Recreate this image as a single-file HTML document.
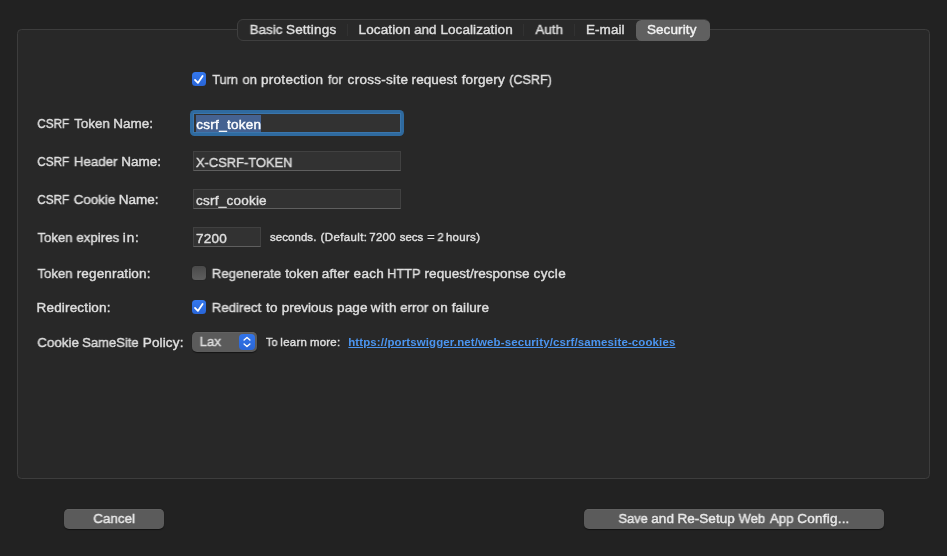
<!DOCTYPE html>
<html><head><meta charset="utf-8"><title>Security</title>
<style>
html,body{margin:0;padding:0;}
body{width:947px;height:556px;background:#222222;position:relative;overflow:hidden;font-family:"Liberation Sans",sans-serif;}
.t{position:absolute;white-space:pre;will-change:transform;transform-origin:0 0;}
.abs{position:absolute;box-sizing:border-box;}
#box{left:17px;top:29px;width:913px;height:450px;background:#282828;border:1px solid #3d3d3d;border-radius:4.5px;}
#tabs{left:237px;top:19px;width:473px;height:22px;background:#292929;border:1px solid #3f3f3f;border-radius:6px;}
#tabsel{left:636px;top:19.5px;width:73.5px;height:21.2px;background:#606060;border-radius:5.5px;}
.sep{width:1px;height:12px;top:24px;background:#323232;}
.cb{width:14px;height:14px;border-radius:3.5px;}
.cb.on{background:linear-gradient(#3478ee,#2865d8);}
.cb.off{background:linear-gradient(#4a4a4a,#5e5e5e);box-shadow:0 0 1px rgba(0,0,0,.5);}
.fld{height:20px;background:#323232;border:1px solid #414141;border-bottom-color:#5f5f5f;}
.btn{height:20px;background:#5b5b5b;border-radius:5px;box-shadow:0 0.5px 1px rgba(0,0,0,.5), inset 0 0.5px 0 #696969;}
</style></head><body>
<div id="box" class="abs"></div>
<div id="tabs" class="abs"></div>
<div class="abs sep" style="left:347px"></div>
<div class="abs sep" style="left:523px"></div>
<div class="abs sep" style="left:574px"></div>
<div id="tabsel" class="abs"></div>

<div class="abs cb on" style="left:192px;top:72px"><svg viewBox="0 0 14 14" width="14" height="14" style="position:absolute;left:0;top:0"><path d="M3.0 7.9 L5.9 10.9 L10.6 3.9" fill="none" stroke="#fff" stroke-width="1.8" stroke-linecap="round" stroke-linejoin="round"/></svg></div>
<div class="abs cb off" style="left:192px;top:266px"></div>
<div class="abs cb on" style="left:192px;top:300px"><svg viewBox="0 0 14 14" width="14" height="14" style="position:absolute;left:0;top:0"><path d="M3.0 7.9 L5.9 10.9 L10.6 3.9" fill="none" stroke="#fff" stroke-width="1.8" stroke-linecap="round" stroke-linejoin="round"/></svg></div>

<div class="abs" style="left:190px;top:110px;width:214px;height:26px;background:#2f6a9f;border-radius:4.5px;"></div>
<div class="abs" style="left:193px;top:113px;width:208px;height:20px;background:#323232;border:1px solid #3a76ad;"></div>
<div class="abs" style="left:196px;top:115px;width:65px;height:17px;background:#456291;"></div>
<div class="abs fld" style="left:193px;top:151px;width:208px;"></div>
<div class="abs fld" style="left:193px;top:189px;width:208px;"></div>
<div class="abs fld" style="left:193px;top:227px;width:68px;"></div>

<div class="abs btn" style="left:192px;top:332px;width:65px;"></div>
<div class="abs" style="left:239px;top:334px;width:16px;height:16px;border-radius:4px;background:linear-gradient(#3274ea,#2a66d6);">
<svg viewBox="0 0 16 16" width="16" height="16" style="position:absolute;left:0;top:0"><path d="M5.1 6.0 L8 3.5 L10.9 6.0 M5.1 10.0 L8 12.5 L10.9 10.0" fill="none" stroke="#fff" stroke-width="1.4" stroke-linecap="round" stroke-linejoin="round"/></svg></div>

<div class="abs btn" style="left:64px;top:509px;width:100px;"></div>
<div class="abs btn" style="left:584px;top:509px;width:300px;"></div>
<div class="line">
<span class="t" style="left:249px;top:22px;font-size:13.52px;line-height:15px;-webkit-text-stroke:0.42px #dfdfdf;transform:translateX(0.58px) scaleX(0.9949);color:#dfdfdf;font-weight:400;">Basic</span>
<span class="t" style="left:285px;top:22px;font-size:13.52px;line-height:15px;-webkit-text-stroke:0.42px #dfdfdf;letter-spacing:0.200px;transform:translateX(0.93px);color:#dfdfdf;font-weight:400;">Settings</span>
</div>
<div class="line">
<span class="t" style="left:358px;top:22px;font-size:13.52px;line-height:15px;-webkit-text-stroke:0.42px #dfdfdf;letter-spacing:0.118px;transform:translateX(0.58px);color:#dfdfdf;font-weight:400;">Location</span>
<span class="t" style="left:414px;top:22px;font-size:13.52px;line-height:15px;-webkit-text-stroke:0.42px #dfdfdf;transform:translateX(0.20px) scaleX(0.9860);color:#dfdfdf;font-weight:400;">and</span>
<span class="t" style="left:440px;top:22px;font-size:13.52px;line-height:15px;-webkit-text-stroke:0.42px #dfdfdf;letter-spacing:0.081px;transform:translateX(0.38px);color:#dfdfdf;font-weight:400;">Localization</span>
</div>
<div class="line">
<span class="t" style="left:535px;top:22px;font-size:13.52px;line-height:15px;-webkit-text-stroke:0.42px #dfdfdf;transform:translateX(0.40px) scaleX(0.9974);color:#dfdfdf;font-weight:400;">Auth</span>
</div>
<div class="line">
<span class="t" style="left:585px;top:22px;font-size:13.52px;line-height:15px;-webkit-text-stroke:0.42px #dfdfdf;letter-spacing:0.050px;transform:translateX(0.99px);color:#dfdfdf;font-weight:400;">E-mail</span>
</div>
<div class="line">
<span class="t" style="left:646px;top:22px;font-size:13.52px;line-height:15px;-webkit-text-stroke:0.42px #f2f2f2;letter-spacing:0.096px;transform:translateX(0.89px);color:#f2f2f2;font-weight:400;">Security</span>
</div>
<div class="line">
<span class="t" style="left:212px;top:72px;font-size:13.52px;line-height:15px;-webkit-text-stroke:0.42px #dfdfdf;transform:translateX(0.32px) scaleX(0.9345);color:#dfdfdf;font-weight:400;">Turn</span>
<span class="t" style="left:242px;top:72px;font-size:13.52px;line-height:15px;-webkit-text-stroke:0.42px #dfdfdf;transform:translateX(0.51px) scaleX(0.9590);color:#dfdfdf;font-weight:400;">on</span>
<span class="t" style="left:260px;top:72px;font-size:13.52px;line-height:15px;-webkit-text-stroke:0.42px #dfdfdf;letter-spacing:0.296px;transform:translateX(0.94px);color:#dfdfdf;font-weight:400;">protection</span>
<span class="t" style="left:327px;top:72px;font-size:13.52px;line-height:15px;-webkit-text-stroke:0.42px #dfdfdf;transform:translateX(0.80px) scaleX(0.9426);color:#dfdfdf;font-weight:400;">for</span>
<span class="t" style="left:347px;top:72px;font-size:13.52px;line-height:15px;-webkit-text-stroke:0.42px #dfdfdf;letter-spacing:0.279px;transform:translateX(0.60px);color:#dfdfdf;font-weight:400;">cross-site</span>
<span class="t" style="left:411px;top:72px;font-size:13.52px;line-height:15px;-webkit-text-stroke:0.42px #dfdfdf;letter-spacing:0.074px;transform:translateX(0.56px);color:#dfdfdf;font-weight:400;">request</span>
<span class="t" style="left:461px;top:72px;font-size:13.52px;line-height:15px;-webkit-text-stroke:0.42px #dfdfdf;letter-spacing:0.156px;transform:translateX(0.66px);color:#dfdfdf;font-weight:400;">forgery</span>
<span class="t" style="left:509px;top:72px;font-size:13.52px;line-height:15px;-webkit-text-stroke:0.42px #dfdfdf;transform:translateX(0.22px) scaleX(0.9317);color:#dfdfdf;font-weight:400;">(CSRF)</span>
</div>
<div class="line">
<span class="t" style="left:37px;top:116px;font-size:13.52px;line-height:15px;-webkit-text-stroke:0.42px #dfdfdf;transform:translateX(0.32px) scaleX(0.8669);color:#dfdfdf;font-weight:400;">CSRF</span>
<span class="t" style="left:74px;top:116px;font-size:13.52px;line-height:15px;-webkit-text-stroke:0.42px #dfdfdf;transform:translateX(0.19px) scaleX(0.9883);color:#dfdfdf;font-weight:400;">Token</span>
<span class="t" style="left:113px;top:116px;font-size:13.52px;line-height:15px;-webkit-text-stroke:0.42px #dfdfdf;letter-spacing:0.024px;transform:translateX(0.15px);color:#dfdfdf;font-weight:400;">Name:</span>
</div>
<div class="line">
<span class="t" style="left:37px;top:154px;font-size:13.52px;line-height:15px;-webkit-text-stroke:0.42px #dfdfdf;transform:translateX(0.32px) scaleX(0.8669);color:#dfdfdf;font-weight:400;">CSRF</span>
<span class="t" style="left:73px;top:154px;font-size:13.52px;line-height:15px;-webkit-text-stroke:0.42px #dfdfdf;transform:translateX(0.74px) scaleX(0.9905);color:#dfdfdf;font-weight:400;">Header</span>
<span class="t" style="left:121px;top:154px;font-size:13.52px;line-height:15px;-webkit-text-stroke:0.42px #dfdfdf;letter-spacing:0.047px;transform:translateX(0.13px);color:#dfdfdf;font-weight:400;">Name:</span>
</div>
<div class="line">
<span class="t" style="left:37px;top:192px;font-size:13.52px;line-height:15px;-webkit-text-stroke:0.42px #dfdfdf;transform:translateX(0.32px) scaleX(0.8669);color:#dfdfdf;font-weight:400;">CSRF</span>
<span class="t" style="left:73px;top:192px;font-size:13.52px;line-height:15px;-webkit-text-stroke:0.42px #dfdfdf;transform:translateX(0.74px) scaleX(0.9882);color:#dfdfdf;font-weight:400;">Cookie</span>
<span class="t" style="left:118px;top:192px;font-size:13.52px;line-height:15px;-webkit-text-stroke:0.42px #dfdfdf;letter-spacing:0.004px;transform:translateX(0.69px);color:#dfdfdf;font-weight:400;">Name:</span>
</div>
<div class="line">
<span class="t" style="left:37px;top:230px;font-size:13.52px;line-height:15px;-webkit-text-stroke:0.42px #dfdfdf;transform:translateX(0.49px) scaleX(0.9716);color:#dfdfdf;font-weight:400;">Token</span>
<span class="t" style="left:76px;top:230px;font-size:13.52px;line-height:15px;-webkit-text-stroke:0.42px #dfdfdf;transform:translateX(0.39px) scaleX(0.9840);color:#dfdfdf;font-weight:400;">expires</span>
<span class="t" style="left:122px;top:230px;font-size:13.52px;line-height:15px;-webkit-text-stroke:0.42px #dfdfdf;letter-spacing:0.826px;transform:translateX(0.83px);color:#dfdfdf;font-weight:400;">in:</span>
</div>
<div class="line">
<span class="t" style="left:37px;top:266px;font-size:13.52px;line-height:15px;-webkit-text-stroke:0.42px #dfdfdf;transform:translateX(0.49px) scaleX(0.9716);color:#dfdfdf;font-weight:400;">Token</span>
<span class="t" style="left:76px;top:266px;font-size:13.52px;line-height:15px;-webkit-text-stroke:0.42px #dfdfdf;letter-spacing:0.146px;transform:translateX(0.70px);color:#dfdfdf;font-weight:400;">regenration:</span>
</div>
<div class="line">
<span class="t" style="left:36px;top:300px;font-size:13.52px;line-height:15px;-webkit-text-stroke:0.42px #dfdfdf;letter-spacing:0.161px;transform:translateX(0.57px);color:#dfdfdf;font-weight:400;">Redirection:</span>
</div>
<div class="line">
<span class="t" style="left:37px;top:335px;font-size:13.52px;line-height:15px;-webkit-text-stroke:0.42px #dfdfdf;transform:translateX(0.32px) scaleX(0.9911);color:#dfdfdf;font-weight:400;">Cookie</span>
<span class="t" style="left:82px;top:335px;font-size:13.52px;line-height:15px;-webkit-text-stroke:0.42px #dfdfdf;transform:translateX(0.16px) scaleX(0.9648);color:#dfdfdf;font-weight:400;">SameSite</span>
<span class="t" style="left:142px;top:335px;font-size:13.52px;line-height:15px;-webkit-text-stroke:0.42px #dfdfdf;letter-spacing:0.139px;transform:translateX(0.75px);color:#dfdfdf;font-weight:400;">Policy:</span>
</div>
<div class="line">
<span class="t" style="left:196px;top:117px;font-size:13.52px;line-height:15px;-webkit-text-stroke:0.42px #ffffff;letter-spacing:0.268px;transform:translateX(0.29px);color:#ffffff;font-weight:400;">csrf_token</span>
</div>
<div class="line">
<span class="t" style="left:195px;top:155px;font-size:13.52px;line-height:15px;-webkit-text-stroke:0.42px #dfdfdf;transform:translateX(0.95px) scaleX(0.9552);color:#dfdfdf;font-weight:400;">X-CSRF-TOKEN</span>
</div>
<div class="line">
<span class="t" style="left:195px;top:193px;font-size:13.52px;line-height:15px;-webkit-text-stroke:0.42px #dfdfdf;letter-spacing:0.234px;transform:translateX(0.94px);color:#dfdfdf;font-weight:400;">csrf_cookie</span>
</div>
<div class="line">
<span class="t" style="left:195px;top:231px;font-size:13.52px;line-height:15px;-webkit-text-stroke:0.42px #dfdfdf;letter-spacing:0.248px;transform:translateX(0.89px);color:#dfdfdf;font-weight:400;">7200</span>
</div>
<div class="line">
<span class="t" style="left:269px;top:231px;font-size:11.44px;line-height:12px;-webkit-text-stroke:0.42px #dfdfdf;letter-spacing:0.099px;transform:translateX(0.88px);color:#dfdfdf;font-weight:400;">seconds.</span>
<span class="t" style="left:320px;top:231px;font-size:11.44px;line-height:12px;-webkit-text-stroke:0.42px #dfdfdf;letter-spacing:0.391px;transform:translateX(0.55px);color:#dfdfdf;font-weight:400;">(Default:</span>
<span class="t" style="left:369px;top:231px;font-size:11.44px;line-height:12px;-webkit-text-stroke:0.42px #dfdfdf;letter-spacing:0.313px;transform:translateX(0.22px);color:#dfdfdf;font-weight:400;">7200</span>
<span class="t" style="left:399px;top:231px;font-size:11.44px;line-height:12px;-webkit-text-stroke:0.42px #dfdfdf;letter-spacing:0.019px;transform:translateX(0.68px);color:#dfdfdf;font-weight:400;">secs</span>
<span class="t" style="left:427px;top:231px;font-size:11.44px;line-height:12px;-webkit-text-stroke:0.42px #dfdfdf;transform:translateX(0.19px) scaleX(1.1083);color:#dfdfdf;font-weight:400;">=</span>
<span class="t" style="left:437px;top:231px;font-size:11.44px;line-height:12px;-webkit-text-stroke:0.42px #dfdfdf;transform:translateX(0.44px) scaleX(0.9821);color:#dfdfdf;font-weight:400;">2</span>
<span class="t" style="left:445px;top:231px;font-size:11.44px;line-height:12px;-webkit-text-stroke:0.42px #dfdfdf;letter-spacing:0.326px;transform:translateX(0.90px);color:#dfdfdf;font-weight:400;">hours)</span>
</div>
<div class="line">
<span class="t" style="left:211px;top:266px;font-size:13.52px;line-height:15px;-webkit-text-stroke:0.42px #dfdfdf;transform:translateX(0.67px) scaleX(0.9848);color:#dfdfdf;font-weight:400;">Regenerate</span>
<span class="t" style="left:285px;top:266px;font-size:13.52px;line-height:15px;-webkit-text-stroke:0.42px #dfdfdf;letter-spacing:0.036px;transform:translateX(0.22px);color:#dfdfdf;font-weight:400;">token</span>
<span class="t" style="left:321px;top:266px;font-size:13.52px;line-height:15px;-webkit-text-stroke:0.42px #dfdfdf;letter-spacing:0.087px;transform:translateX(0.87px);color:#dfdfdf;font-weight:400;">after</span>
<span class="t" style="left:353px;top:266px;font-size:13.52px;line-height:15px;-webkit-text-stroke:0.42px #dfdfdf;letter-spacing:0.278px;transform:translateX(0.59px);color:#dfdfdf;font-weight:400;">each</span>
<span class="t" style="left:387px;top:266px;font-size:13.52px;line-height:15px;-webkit-text-stroke:0.42px #dfdfdf;transform:translateX(0.13px) scaleX(0.9468);color:#dfdfdf;font-weight:400;">HTTP</span>
<span class="t" style="left:424px;top:266px;font-size:13.52px;line-height:15px;-webkit-text-stroke:0.42px #dfdfdf;letter-spacing:0.036px;transform:translateX(0.55px);color:#dfdfdf;font-weight:400;">request/response</span>
<span class="t" style="left:533px;top:266px;font-size:13.52px;line-height:15px;-webkit-text-stroke:0.42px #dfdfdf;letter-spacing:0.338px;transform:translateX(0.58px);color:#dfdfdf;font-weight:400;">cycle</span>
</div>
<div class="line">
<span class="t" style="left:211px;top:300px;font-size:13.52px;line-height:15px;-webkit-text-stroke:0.42px #dfdfdf;transform:translateX(0.65px) scaleX(0.9886);color:#dfdfdf;font-weight:400;">Redirect</span>
<span class="t" style="left:266px;top:300px;font-size:13.52px;line-height:15px;-webkit-text-stroke:0.42px #dfdfdf;letter-spacing:0.293px;transform:translateX(0.07px);color:#dfdfdf;font-weight:400;">to</span>
<span class="t" style="left:281px;top:300px;font-size:13.52px;line-height:15px;-webkit-text-stroke:0.42px #dfdfdf;letter-spacing:0.001px;transform:translateX(0.66px);color:#dfdfdf;font-weight:400;">previous</span>
<span class="t" style="left:337px;top:300px;font-size:13.52px;line-height:15px;-webkit-text-stroke:0.42px #dfdfdf;letter-spacing:0.106px;transform:translateX(0.10px);color:#dfdfdf;font-weight:400;">page</span>
<span class="t" style="left:370px;top:300px;font-size:13.52px;line-height:15px;-webkit-text-stroke:0.42px #dfdfdf;letter-spacing:0.521px;transform:translateX(0.84px);color:#dfdfdf;font-weight:400;">with</span>
<span class="t" style="left:400px;top:300px;font-size:13.52px;line-height:15px;-webkit-text-stroke:0.42px #dfdfdf;transform:translateX(0.24px) scaleX(0.9788);color:#dfdfdf;font-weight:400;">error</span>
<span class="t" style="left:432px;top:300px;font-size:13.52px;line-height:15px;-webkit-text-stroke:0.42px #dfdfdf;letter-spacing:0.402px;transform:translateX(0.33px);color:#dfdfdf;font-weight:400;">on</span>
<span class="t" style="left:451px;top:300px;font-size:13.52px;line-height:15px;-webkit-text-stroke:0.42px #dfdfdf;letter-spacing:0.085px;transform:translateX(0.63px);color:#dfdfdf;font-weight:400;">failure</span>
</div>
<div class="line">
<span class="t" style="left:199px;top:334px;font-size:13.52px;line-height:15px;-webkit-text-stroke:0.42px #dfdfdf;transform:translateX(0.53px) scaleX(0.9889);color:#dfdfdf;font-weight:400;">Lax</span>
</div>
<div class="line">
<span class="t" style="left:265px;top:336px;font-size:11.44px;line-height:12px;-webkit-text-stroke:0.42px #dfdfdf;transform:translateX(0.95px) scaleX(0.9577);color:#dfdfdf;font-weight:400;">To</span>
<span class="t" style="left:280px;top:336px;font-size:11.44px;line-height:12px;-webkit-text-stroke:0.42px #dfdfdf;letter-spacing:0.262px;transform:translateX(0.34px);color:#dfdfdf;font-weight:400;">learn</span>
<span class="t" style="left:309px;top:336px;font-size:11.44px;line-height:12px;-webkit-text-stroke:0.42px #dfdfdf;letter-spacing:0.232px;transform:translateX(0.91px);color:#dfdfdf;font-weight:400;">more:</span>
</div>
<div class="line">
<span class="t" style="left:348px;top:336px;font-size:11.44px;line-height:12px;letter-spacing:0.140px;transform:translateX(0.22px);color:#4b95f0;font-weight:700;text-decoration:underline;text-underline-offset:1px;">https://portswigger.net/web-security/csrf/samesite-cookies</span>
</div>
<div class="line">
<span class="t" style="left:93px;top:511px;font-size:13.52px;line-height:15px;-webkit-text-stroke:0.42px #e8e8e8;transform:translateX(0.32px) scaleX(0.9930);color:#e8e8e8;font-weight:400;">Cancel</span>
</div>
<div class="line">
<span class="t" style="left:618px;top:511px;font-size:13.52px;line-height:15px;-webkit-text-stroke:0.42px #e8e8e8;transform:translateX(0.47px) scaleX(0.9523);color:#e8e8e8;font-weight:400;">Save</span>
<span class="t" style="left:651px;top:511px;font-size:13.52px;line-height:15px;-webkit-text-stroke:0.42px #e8e8e8;letter-spacing:0.060px;transform:translateX(0.27px);color:#e8e8e8;font-weight:400;">and</span>
<span class="t" style="left:677px;top:511px;font-size:13.52px;line-height:15px;-webkit-text-stroke:0.42px #e8e8e8;letter-spacing:0.037px;transform:translateX(0.41px);color:#e8e8e8;font-weight:400;">Re-Setup</span>
<span class="t" style="left:738px;top:511px;font-size:13.52px;line-height:15px;-webkit-text-stroke:0.42px #e8e8e8;transform:translateX(0.59px) scaleX(0.9618);color:#e8e8e8;font-weight:400;">Web</span>
<span class="t" style="left:769px;top:511px;font-size:13.52px;line-height:15px;-webkit-text-stroke:0.42px #e8e8e8;transform:translateX(0.82px) scaleX(0.9861);color:#e8e8e8;font-weight:400;">App</span>
<span class="t" style="left:797px;top:511px;font-size:13.52px;line-height:15px;-webkit-text-stroke:0.42px #e8e8e8;letter-spacing:0.217px;transform:translateX(0.30px);color:#e8e8e8;font-weight:400;">Config...</span>
</div>
</body></html>
